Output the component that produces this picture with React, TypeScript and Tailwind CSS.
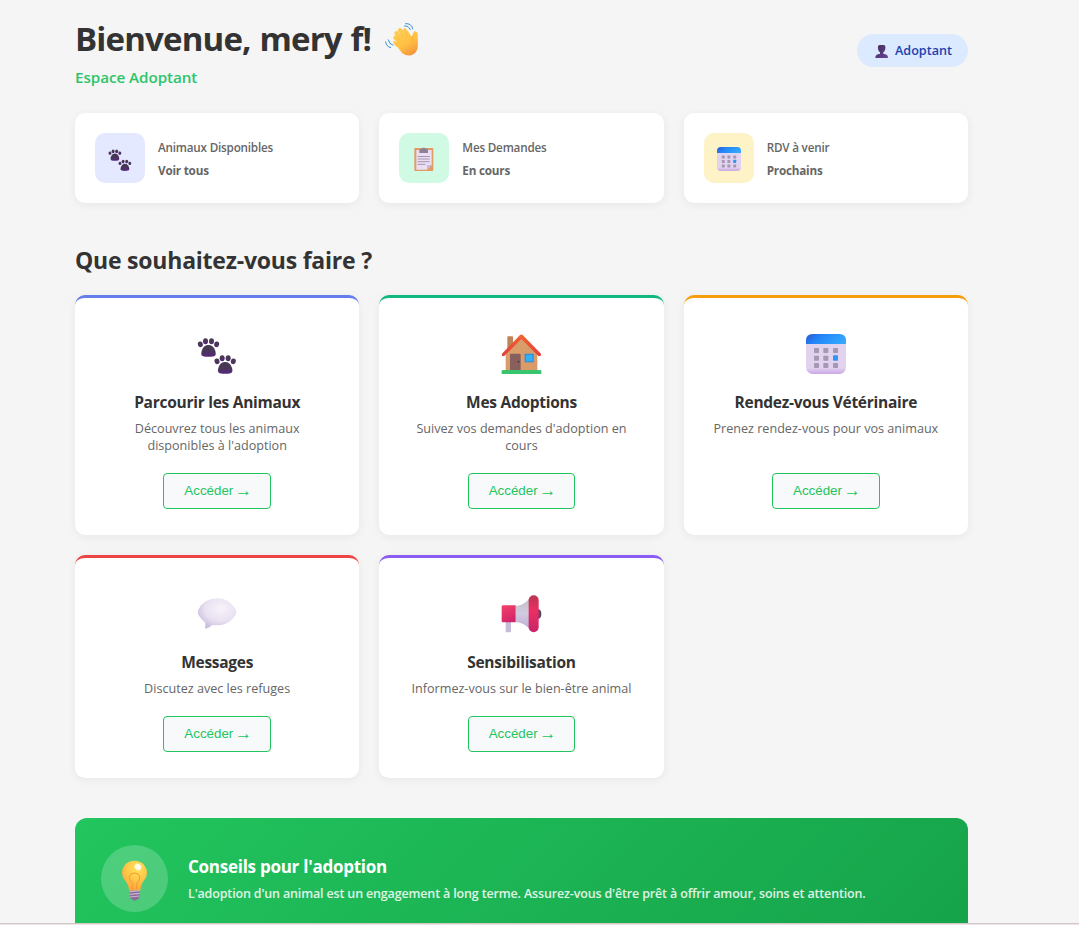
import React from "react";

type IconProps = { className?: string };

function Wave({ className }: IconProps) {
  return (
    <svg viewBox="972 35 105.6 105.6" className={className}>
      <defs>
        <linearGradient id="hand" x1="0" y1="0" x2="0.6" y2="1">
          <stop offset="0" stopColor="#ffcf52" />
          <stop offset="0.6" stopColor="#ffc043" />
          <stop offset="1" stopColor="#f59a3c" />
        </linearGradient>
      </defs>
      <g stroke="#ffc94d" strokeLinecap="round" fill="none" strokeWidth="12">
        <path d="M1006 82 L1024 102" />
        <path d="M1010 69 L1032 95" strokeWidth="13" />
        <path d="M1020 60 L1042 88" strokeWidth="13" />
        <path d="M1035 60 L1052 84" />
      </g>
      <path d="M1004 99 L1024 84 L1046 72 Q1056 82 1057 78 Q1060 62 1067 63 Q1074 64 1074 76 L1074 108 Q1073 124 1061 132 Q1044 141 1027 129 Z" fill="url(#hand)" />
      <path d="M1000 94 Q1003 91 1007 94 L1016 103 L1012 111 L1001 101 Z" fill="#ffc548" />
      <path d="M1012 82 L1021 91 M1022 73 L1031 82 M1035 68 L1042 77" stroke="#eda03a" strokeWidth="1.5" fill="none" />
      <path d="M1058 78 Q1062 90 1054 97" stroke="#ee9c35" strokeWidth="1.8" fill="none" />
      <g stroke="#3590d8" strokeWidth="3" fill="none" strokeLinecap="round">
        <path d="M1037 40 Q1055 38 1059 56" />
        <path d="M1034 47 Q1048 46 1051 58" />
        <path d="M977 95 Q979 110 992 112" />
        <path d="M985 89 Q987 102 999 105" />
      </g>
    </svg>
  );
}

function Person({ className }: IconProps) {
  return (
    <svg viewBox="106 75 39 39" className={className}>
      <defs>
        <linearGradient id="bust" x1="0" y1="0" x2="1" y2="1">
          <stop offset="0" stopColor="#3f3150" />
          <stop offset="1" stopColor="#6b3fa0" />
        </linearGradient>
      </defs>
      <path d="M117 76 Q126 73 135 76 Q138 78 137 86 Q136 95 131 97 L131 101 L141 104 Q145 106 145 114 L107 114 Q107 106 111 104 L121 101 L121 97 Q116 94 115 86 Q114 78 117 76 Z" fill="url(#bust)" />
    </svg>
  );
}

function Paw({ x, y }: { x: number; y: number }) {
  return (
    <g transform={`translate(${x} ${y})`} fill="url(#paw)">
      <ellipse cx="8" cy="18" rx="7.5" ry="8.5" transform="rotate(-12 8 18)" />
      <ellipse cx="23.5" cy="9" rx="7.5" ry="9" />
      <ellipse cx="41.5" cy="9" rx="7.5" ry="9" />
      <ellipse cx="57" cy="18" rx="7.5" ry="8.5" transform="rotate(12 57 18)" />
      <path d="M32 20 Q46 20 52 35 Q58 51 49 54 Q32 57 16 54 Q7 51 13 35 Q19 20 32 20 Z" />
    </g>
  );
}

function Paws({ className }: IconProps) {
  return (
    <svg viewBox="381 133 120 120" className={className}>
      <defs>
        <linearGradient id="paw" x1="0" y1="0" x2="0.2" y2="1">
          <stop offset="0" stopColor="#433b4e" />
          <stop offset="0.6" stopColor="#4a3659" />
          <stop offset="1" stopColor="#55297a" />
        </linearGradient>
      </defs>
      <Paw x={383} y={146} />
      <Paw x={433} y={197} />
    </svg>
  );
}

function Clipboard({ className }: IconProps) {
  return (
    <svg viewBox="113 126 72 72" className={className}>
      <rect x="120" y="129" width="57" height="69" rx="3" fill="#e39a63" />
      <path d="M126 135 H172 V180 L158 194 H126 Z" fill="#e9def3" />
      <path d="M172 180 L158 194 V183 Q158 180 161 180 Z" fill="#c9b8da" />
      <path d="M135 136 Q135 132 139 132 H141 Q142 128 148 128 Q154 128 155 132 H157 Q161 132 161 136 V144 H135 Z" fill="#8f8195" />
      <path d="M130 154.500 H166 M130 162 H166 M130 170 H166 M130 178 H153" stroke="#9b8ba6" strokeWidth="2.600" />
    </svg>
  );
}

function Calendar({ className }: IconProps) {
  return (
    <svg viewBox="33 27 120 120" className={className}>
      <defs>
        <linearGradient id="calTop" x1="0" y1="0.3" x2="1" y2="0.6">
          <stop offset="0" stopColor="#2862dc" />
          <stop offset="0.35" stopColor="#2488f8" />
          <stop offset="1" stopColor="#35a8ff" />
        </linearGradient>
        <linearGradient id="calBody" x1="0" y1="0" x2="0" y2="1">
          <stop offset="0" stopColor="#e0d4ec" />
          <stop offset="0.85" stopColor="#e2d2f0" />
          <stop offset="1" stopColor="#c9a6e4" />
        </linearGradient>
      </defs>
      <rect x="33" y="27" width="120" height="120" rx="20" fill="url(#calBody)" />
      <path d="M33 57 V47 Q33 27 53 27 H133 Q153 27 153 47 V57 Z" fill="url(#calTop)" />
      <g fill="#a598b3">
        <rect x="57" y="69" width="15" height="15" rx="2" />
        <rect x="85" y="69" width="15" height="15" rx="2" />
        <rect x="114" y="69" width="15" height="15" rx="2" />
        <rect x="57" y="92" width="15" height="15" rx="2" />
        <rect x="85" y="92" width="15" height="15" rx="2" />
        <rect x="57" y="114" width="15" height="15" rx="2" />
        <rect x="85" y="114" width="15" height="15" rx="2" />
        <rect x="114" y="114" width="15" height="15" rx="2" />
      </g>
      <rect x="114" y="91" width="15" height="16" rx="2" fill="#2e96f5" />
    </svg>
  );
}

function House({ className }: IconProps) {
  return (
    <svg viewBox="34 28 120 120" overflow="visible" className={className}>
      <defs>
        <linearGradient id="roof" x1="0.5" y1="0" x2="0.5" y2="1">
          <stop offset="0" stopColor="#f2652f" />
          <stop offset="1" stopColor="#e03e3e" />
        </linearGradient>
        <linearGradient id="wall" x1="0" y1="0" x2="1" y2="1">
          <stop offset="0" stopColor="#d9a06b" />
          <stop offset="1" stopColor="#d99a68" />
        </linearGradient>
      </defs>
      <path d="M53 37 Q53 35 55 35 H68 Q70 35 70 37 V70 H53 Z" fill="#bd8657" />
      <path d="M95 38 L143 85 V137 H48 V85 Z" fill="url(#wall)" />
      <path d="M91 31 Q95 28 99 31 L154 87 Q156 95 147 95 L95 43 L43 95 Q34 95 37 87 Z" fill="url(#roof)" />
      <rect x="61" y="87" width="32" height="50" rx="3" fill="#87605d" />
      <circle cx="86.500" cy="111" r="3" fill="#51393f" />
      <rect x="105" y="87" width="27" height="26" rx="2" fill="#2387dd" />
      <rect x="108" y="90" width="21" height="20" fill="#35aef8" />
      <path d="M36 140 Q36 136 40 136 H151 Q155 136 155 140 V148 H36 Z" fill="#39c46e" />
    </svg>
  );
}

function Bubble({ className }: IconProps) {
  return (
    <svg viewBox="36 26 120 120" overflow="visible" className={className}>
      <defs>
        <radialGradient id="bub" cx="0.6" cy="0.35" r="0.75">
          <stop offset="0" stopColor="#f7f3fa" />
          <stop offset="0.55" stopColor="#e9e1f1" />
          <stop offset="1" stopColor="#c3b2da" />
        </radialGradient>
      </defs>
      <path d="M97 39 Q130 39 148 66 Q155 76 154 82 Q152 92 138 105 Q122 120 97 120 Q88 120 82 119 Q74 128 62 130 Q60 128 61 112 Q48 102 41 90 Q36 82 40 73 Q57 39 97 39 Z" fill="url(#bub)" />
    </svg>
  );
}

function Megaphone({ className }: IconProps) {
  return (
    <svg viewBox="34 26 120 120" overflow="visible" className={className}>
      <defs>
        <linearGradient id="horn" x1="0" y1="0" x2="0" y2="1">
          <stop offset="0" stopColor="#c5bfca" />
          <stop offset="0.5" stopColor="#d2cadf" />
          <stop offset="1" stopColor="#bcaed2" />
        </linearGradient>
        <linearGradient id="rim" x1="0" y1="0" x2="0" y2="1">
          <stop offset="0" stopColor="#b93652" />
          <stop offset="0.4" stopColor="#eb2f64" />
          <stop offset="1" stopColor="#c72568" />
        </linearGradient>
        <linearGradient id="grip" x1="0" y1="0" x2="0.4" y2="1">
          <stop offset="0" stopColor="#f4426b" />
          <stop offset="1" stopColor="#d32668" />
        </linearGradient>
      </defs>
      <rect x="48" y="108" width="16" height="33" rx="1" fill="#c7bcd8" />
      <path d="M78 62 Q105 59 120 38 V132 Q105 113 78 110 Z" fill="url(#horn)" />
      <path d="M36 64 Q36 60 40 60 H78 V111 H40 Q36 111 36 107 Z" fill="url(#grip)" />
      <ellipse cx="145" cy="86" rx="10" ry="14" fill="#594a62" />
      <rect x="117" y="30" width="30" height="111" rx="15" fill="url(#rim)" />
    </svg>
  );
}

function Bulb({ className }: IconProps) {
  return (
    <svg viewBox="135 168 120 120" overflow="visible" className={className}>
      <defs>
        <radialGradient id="glass" cx="0.6" cy="0.25" r="0.8">
          <stop offset="0" stopColor="#ffe15c" />
          <stop offset="0.5" stopColor="#ffc848" />
          <stop offset="1" stopColor="#fba13a" />
        </radialGradient>
      </defs>
      <path d="M193.500 167 Q211 167 222 179 Q231 190 231 204 Q231 217 221 228 Q213 237 211 257 H177 Q175 237 166 228 Q156 217 156 204 Q156 190 165 179 Q176 167 193.500 167 Z" fill="url(#glass)" />
      <path d="M188 257 V235 Q176 225 178 214 Q181 204 193.500 204 Q206 204 209 214 Q211 225 200 235 V257" fill="none" stroke="#f39a32" strokeWidth="3" />
      <ellipse cx="204" cy="186" rx="11" ry="9" fill="#fffbe5" transform="rotate(35 204 186)" />
      <path d="M178 257 H210 L209 277 Q205 283 200 284 Q194 289 187 284 Q182 283 179 277 Z" fill="#8b6b9e" />
      <path d="M178 260 L210 257 M178 268 L210 265 M179 276 L209 273" stroke="#c9b6c8" strokeWidth="3.500" />
    </svg>
  );
}

const stats = [
  { label: "Animaux Disponibles", value: "Voir tous", tile: "bg-[#e5e9ff]", Icon: Paws },
  { label: "Mes Demandes", value: "En cours", tile: "bg-[#d1fae5]", Icon: Clipboard },
  { label: "RDV à venir", value: "Prochains", tile: "bg-[#fef3c7]", Icon: Calendar },
];

const actions = [
  { title: "Parcourir les Animaux", lines: ["Découvrez tous les animaux", "disponibles à l'adoption"], border: "border-[#667eea]", Icon: Paws },
  { title: "Mes Adoptions", lines: ["Suivez vos demandes d'adoption en", "cours"], border: "border-[#10b981]", Icon: House },
  { title: "Rendez-vous Vétérinaire", lines: ["Prenez rendez-vous pour vos animaux"], border: "border-[#f59e0b]", Icon: Calendar },
  { title: "Messages", lines: ["Discutez avec les refuges"], border: "border-[#ef4444]", Icon: Bubble },
  { title: "Sensibilisation", lines: ["Informez-vous sur le bien-être animal"], border: "border-[#8b5cf6]", Icon: Megaphone },
];

export default function App() {
  return (
    <div className="flex h-[925px] flex-col overflow-hidden bg-[#f5f5f5] font-['Open_Sans',sans-serif] text-[#333]">
      <div className="h-[923px] shrink-0 overflow-hidden pr-[111px] pl-[75px]">
        <header className="flex h-[113px] items-start justify-between">
          <div>
            <h1 className="mt-[16px] flex h-[46px] items-center text-[33px] font-bold whitespace-nowrap">
              <span className="tracking-[-0.83px] [word-spacing:1px]">Bienvenue, mery f!</span>
              <Wave className="ml-[13px] size-[35px]" />
            </h1>
            <p className="mt-[4px] text-[15.200px] leading-[22px] font-semibold tracking-[-0.05px] text-[#2cc56a]">Espace Adoptant</p>
          </div>
          <div className="mt-[34px] flex h-[33px] w-[111px] items-center rounded-full bg-[#dbeafe] pl-[18px] text-[12.600px] font-semibold text-[#1e40af]">
            <Person className="mt-px size-[13px]" />
            <span className="ml-[7px] pt-[2px]">Adoptant</span>
          </div>
        </header>

        <section className="grid grid-cols-3 gap-5">
          {stats.map(({ label, value, tile, Icon }) => (
            <div key={label} className="flex h-[90px] items-center rounded-[10px] bg-white px-5 shadow-[0_2px_10px_rgba(0,0,0,0.06)]">
              <div className={`flex size-[50px] shrink-0 items-center justify-center rounded-[10px] pt-[2px] ${tile}`}>
                <Icon className="size-6" />
              </div>
              <div className="ml-[13px] pt-[2px] text-[11.700px] leading-[23px] tracking-[-0.2px] whitespace-nowrap text-[#666]">
                <p className="font-semibold">{label}</p>
                <p className="font-bold">{value}</p>
              </div>
            </div>
          ))}
        </section>

        <h2 className="mt-[40px] h-[52px] text-[23px] leading-[34px] font-bold tracking-[-0.22px]">Que souhaitez-vous faire ?</h2>

        <section className="grid grid-cols-3 grid-rows-[240px_223px] gap-5">
          {actions.map(({ title, lines, border, Icon }) => (
            <div key={title} className={`flex flex-col items-center rounded-[10px] border-t-[3px] bg-white pt-9 pb-[26px] text-center shadow-[0_2px_10px_rgba(0,0,0,0.06)] ${border}`}>
              <Icon className="size-10 shrink-0" />
              <h3 className="mt-[16px] text-[15.500px] leading-[24px] font-bold tracking-[-0.27px] whitespace-nowrap">{title}</h3>
              <div className="mt-[6px] flex-1 text-[12.600px] leading-[17px] whitespace-nowrap text-[#666]">
                {lines.map((line) => (
                  <p key={line}>{line}</p>
                ))}
              </div>
              <button className="h-9 w-[107.600px] shrink-0 rounded-[4px] border border-[#22c55e] bg-[#f8f9fa] font-['Liberation_Sans',sans-serif] text-[13.333px] leading-[16px] whitespace-nowrap text-[#22c55e]">
                Accéder <span className="mx-[-2px] align-[-1px] text-[17px] leading-[12px]">→</span>
              </button>
            </div>
          ))}
        </section>

        <section className="mt-10 flex h-[121px] items-center rounded-xl bg-[linear-gradient(135deg,#22c55e,#16a34a)] px-[26px] text-white">
          <div className="flex size-[67px] shrink-0 items-center justify-center rounded-full bg-white/20 pt-[4px]">
            <Bulb className="size-10" />
          </div>
          <div className="ml-[20px] pt-[2px] whitespace-nowrap">
            <h3 className="text-[17px] leading-[28px] font-bold tracking-[-0.26px]">Conseils pour l'adoption</h3>
            <p className="text-[12.500px] leading-[26px] font-semibold tracking-[-0.155px] text-white/85">
              L'adoption d'un animal est un engagement à long terme. Assurez-vous d'être prêt à offrir amour, soins et attention.
            </p>
          </div>
        </section>
      </div>
      <div className="h-px shrink-0 bg-[#d3c8c8]" />
      <div className="h-px shrink-0 bg-[#ece4e4]" />
    </div>
  );
}
